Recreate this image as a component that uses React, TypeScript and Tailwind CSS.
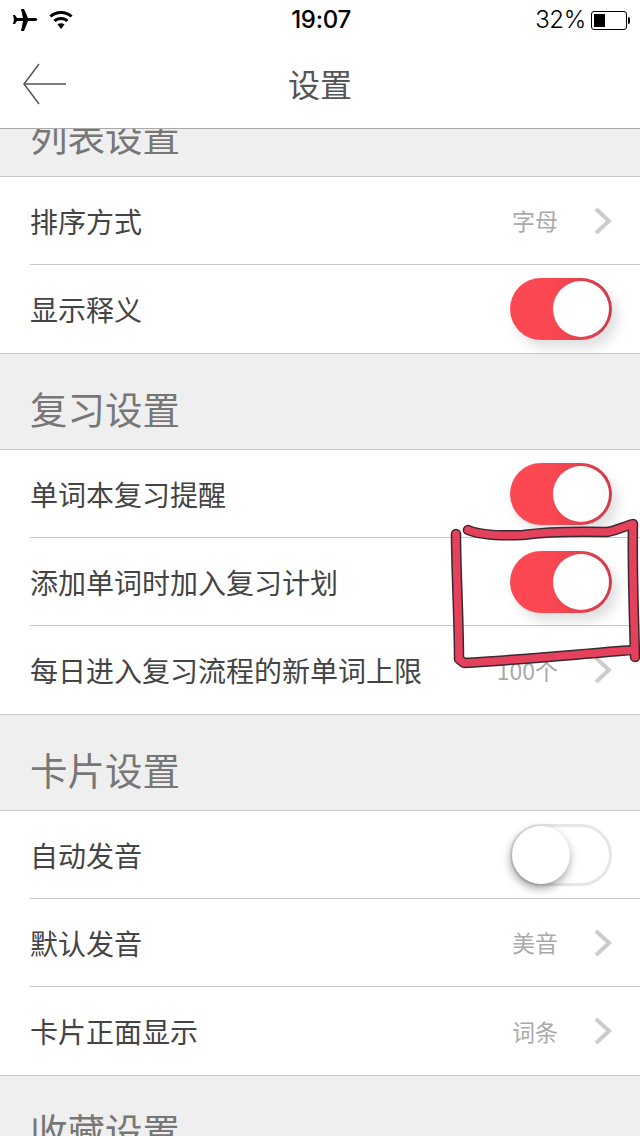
const cjk = "font-['Noto_Sans_CJK_SC','Liberation_Sans',sans-serif]";

function Toggle({ on }: { on: boolean }) {
  if (on) {
    return (
      <div className="relative h-[62px] w-[102px] rounded-full bg-gradient-to-r from-[#fc4852] from-40% to-[#cf3a4b] shadow-[6px_8px_12px_rgba(0,0,0,0.12)]">
        <div className="absolute right-[3px] top-[3px] h-[56px] w-[56px] rounded-full bg-white" />
      </div>
    );
  }
  return (
    <div className="relative h-[62px] w-[102px] rounded-full border-[3px] border-[#e6e6e6] bg-white">
      <div className="absolute left-[-1px] top-[-1px] h-[58px] w-[58px] rounded-full bg-white shadow-[-1px_4px_10px_rgba(0,0,0,0.4)]" />
    </div>
  );
}

function Chevron() {
  return (
    <svg width="18" height="28" viewBox="0 0 18 28" fill="none" className="ml-[36px]">
      <path d="M2 2 L15 14 L2 26" stroke="#cbcbd0" strokeWidth="4" />
    </svg>
  );
}

function Row({ label, value, toggle, last }: { label: string; value?: string; toggle?: boolean; last?: boolean }) {
  return (
    <div className="pl-[30px]">
      <div className={`flex h-[88px] items-center justify-between pr-[28px] ${last ? "" : "border-b border-[#c8c8c8]"}`}>
        <span className="text-[28px] text-[#444]">{label}</span>
        {toggle === undefined ? (
          <div className="flex items-center">
            <span className="text-[23px] text-[#aaa]">{value}</span>
            <Chevron />
          </div>
        ) : (
          <Toggle on={toggle} />
        )}
      </div>
    </div>
  );
}

function Section({ title }: { title: string }) {
  return (
    <div className="flex h-[97px] items-end border-y border-[#c8c8c8] bg-[#efefef] pb-[13px] pl-[30px]">
      <h2 className="text-[37.5px] font-normal leading-[56px] text-[#777]">{title}</h2>
    </div>
  );
}

export default function App() {
  return (
    <div className={`relative h-[1136px] w-[640px] overflow-hidden bg-white ${cjk}`}>
      <div className="relative z-10 bg-white">
        {/* status bar */}
        <div className="flex h-[40px] items-center justify-between pl-[12px] pr-[10px] text-black">
          <div className="flex w-[200px] items-center gap-[11px]">
            <svg width="26" height="24" viewBox="0 0 26 24" fill="black">
              <path d="M9 1 L12 1 L16 10 L23 10 C26 10 26 13 23 13 L16 13 L12 23 L9 23 L11 13 L5 13 L3 16 L1 16 L2 11.5 L1 7 L3 7 L5 10 L11 10 Z" />
            </svg>
            <svg width="24" height="20" viewBox="0 0 24 20" fill="none" stroke="black" strokeWidth="3">
              <path d="M1.5 6.5 C7 1 17 1 22.5 6.5" />
              <path d="M5.5 11 C9 7.5 15 7.5 18.500 11" />
              <path d="M12 19 L8.500 14.500 C10.500 12.800 13.500 12.800 15.500 14.500 Z" fill="black" stroke="none" />
            </svg>
          </div>
          <span className="font-['Inter',sans-serif] text-[24px] font-medium tracking-[-0.3px]">19:07</span>
          <div className="flex w-[200px] items-center justify-end">
            <span className="mr-[5px] font-['Inter',sans-serif] text-[24px] font-light tracking-[-0.3px]">32%</span>
            <div className="h-[19px] w-[36px] rounded-[3px] border border-black p-[2px]">
              <div className="h-full w-[11px] bg-black" />
            </div>
            <div className="ml-[1px] h-[7px] w-[2px] rounded-r-full bg-black" />
          </div>
        </div>

        {/* nav bar */}
        <div className="relative flex h-[89px] items-center justify-center border-b border-[#a9a9a9] pb-[2px]">
          <svg width="46" height="42" viewBox="0 0 46 42" fill="none" stroke="#555" strokeWidth="1.5" className="absolute left-[22px] top-[23px]">
            <path d="M44 21 L2 21 M17 1 L2 21 L17 41" />
          </svg>
          <h1 className="text-[32px] font-normal text-[#555]">设置</h1>
        </div>
      </div>

      {/* list, scrolled under the nav bar */}
      <div className="-mt-[49px]">
        <Section title="列表设置" />
        <Row label="排序方式" value="字母" />
        <Row label="显示释义" toggle last />
        <Section title="复习设置" />
        <Row label="单词本复习提醒" toggle />
        <Row label="添加单词时加入复习计划" toggle />
        <Row label="每日进入复习流程的新单词上限" value="100个" last />
        <Section title="卡片设置" />
        <Row label="自动发音" toggle={false} />
        <Row label="默认发音" value="美音" />
        <Row label="卡片正面显示" value="词条" last />
        <Section title="收藏设置" />
      </div>

      {/* hand-drawn annotation */}
      <svg width="640" height="1136" viewBox="0 0 640 1136" fill="none" strokeLinecap="round" strokeLinejoin="round" className="absolute left-0 top-0 z-20">
        <g stroke="#3a2a30" strokeWidth="10.500">
          <path d="M456 534 C456 570 459 620 459 659 L464 663 C520 660 580 654 633 650" />
          <path d="M468 530 C480 535 500 536 523 535 C545 532 565 531 607 532 C618 530 625 526 633 524 C632 570 634 610 635 657" />
        </g>
        <g stroke="#e5405c" strokeWidth="7.500">
          <path d="M456 534 C456 570 459 620 459 659 L464 663 C520 660 580 654 633 650" />
          <path d="M468 530 C480 535 500 536 523 535 C545 532 565 531 607 532 C618 530 625 526 633 524 C632 570 634 610 635 657" />
        </g>
      </svg>
    </div>
  );
}
